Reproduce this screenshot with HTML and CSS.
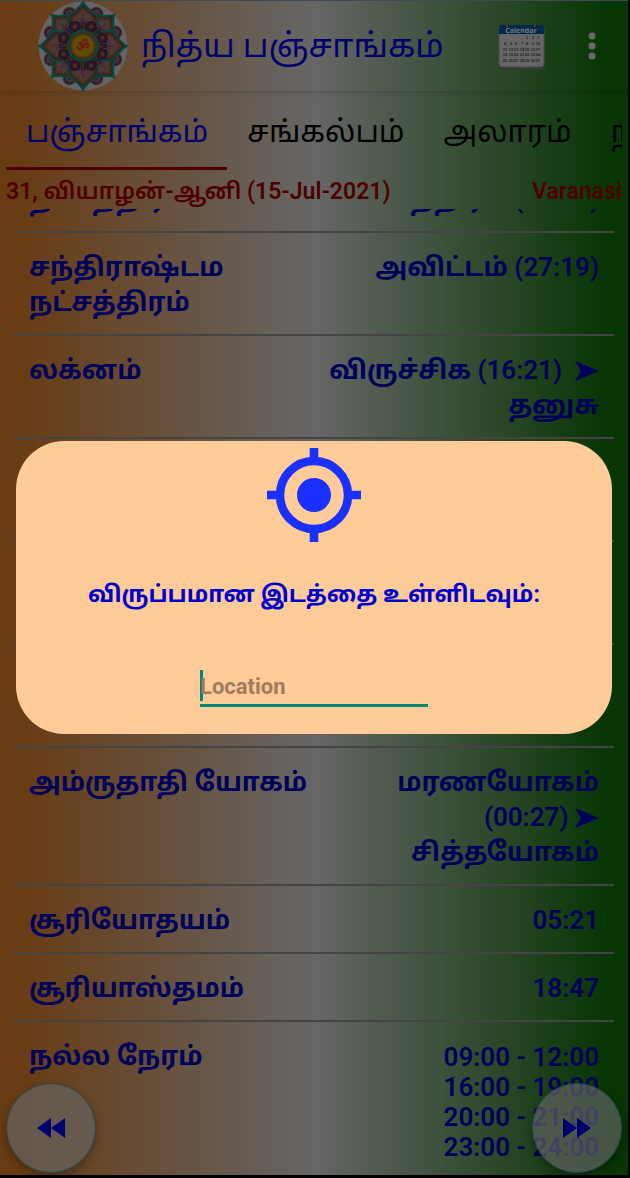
FILE: index.html
```html
<!DOCTYPE html>
<html lang="ta">
<head>
<meta charset="utf-8">
<meta name="viewport" content="width=device-width, initial-scale=1">
<title>நித்ய பஞ்சாங்கம்</title>
<link rel="stylesheet" href="styles.css">
</head>
<body>
<div class="app">
  <header class="toolbar">
    <svg class="logo" viewBox="-45 -45 90 90" aria-hidden="true">
      <defs>
        <g id="petal">
          <path d="M0-44C-3-38-8-35-12-32C-17-28-15-24-14-18L-10-12H10L14-18C15-24 17-28 12-32C8-35 3-38 0-44Z" fill="#33261a" stroke="#0a4545" stroke-width="2"/>
          <path d="M0-38C-3-33-12-30-11-24L-5-15H5L11-24C12-30 3-33 0-38Z" fill="#4e3636" stroke="#46301a" stroke-width="1.6"/>
          <path d="M0-32V-24M-3-27L0-23L3-27M-5-25L-3-21M5-25L3-21" fill="none" stroke="#3a2328" stroke-width="1"/>
        </g>
        <g id="bud">
          <circle cy="-35" r="7" fill="#44323a"/>
          <circle cy="-35" r="5" fill="none" stroke="#301520" stroke-width="1.4"/>
          <circle cy="-34" r="2.400" fill="#4c1d26"/>
        </g>
        <g id="bead">
          <circle cy="-21" r="5.500" fill="#20142e"/>
          <circle cy="-21" r="3.500" fill="#401716"/>
          <circle cy="-21" r="1.600" fill="#453c20"/>
        </g>
      </defs>
      <circle r="44.500" fill="#646464"/>
      <g>
        <use href="#bud" transform="rotate(22.500)"/><use href="#bud" transform="rotate(67.500)"/><use href="#bud" transform="rotate(112.500)"/><use href="#bud" transform="rotate(157.500)"/>
        <use href="#bud" transform="rotate(202.500)"/><use href="#bud" transform="rotate(247.500)"/><use href="#bud" transform="rotate(292.500)"/><use href="#bud" transform="rotate(337.500)"/>
        <use href="#petal" transform="rotate(45)"/><use href="#petal" transform="rotate(135)"/><use href="#petal" transform="rotate(225)"/><use href="#petal" transform="rotate(315)"/>
        <use href="#petal"/><use href="#petal" transform="rotate(90)"/><use href="#petal" transform="rotate(180)"/><use href="#petal" transform="rotate(270)"/>
      </g>
      <circle r="20" fill="#2b2418"/>
      <circle r="21" fill="none" stroke="#2a172c" stroke-width="6" stroke-dasharray="2 1"/>
      <circle r="18" fill="none" stroke="#3c3119" stroke-width="3" stroke-dasharray="2 2"/>
      <g>
        <use href="#bead" transform="rotate(22.500)"/><use href="#bead" transform="rotate(67.500)"/><use href="#bead" transform="rotate(112.500)"/><use href="#bead" transform="rotate(157.500)"/>
        <use href="#bead" transform="rotate(202.500)"/><use href="#bead" transform="rotate(247.500)"/><use href="#bead" transform="rotate(292.500)"/><use href="#bead" transform="rotate(337.500)"/>
      </g>
      <circle r="15" fill="#3a3018" stroke="#0a4545" stroke-width="1.800"/>
      <circle r="11.500" fill="#5f4a08" stroke="#4e3610" stroke-width="1.500"/>
      <text class="om" y="5">ॐ</text>
    </svg>
    <h1 class="title">நித்ய பஞ்சாங்கம்</h1>
    <button class="icon-button calendar" type="button" aria-label="Calendar">
      <svg viewBox="0 0 48 50" aria-hidden="true">
        <path d="M2 8H46L47 48Q47 49 45 49H4Q1 49 1 46Z" fill="#383838"/>
        <path d="M1 8H46V43Q46 46 43 46H4Q1 46 1 43Z" fill="#666" stroke="#4a4a4a"/>
        <path d="M1 6Q1 4 3 4H44Q46 4 46 6V13H1Z" fill="#06284c"/>
        <path d="M9 2V8M37 2V8" fill="none" stroke="#1b1b1b" stroke-width="3"/>
        <path d="M9 2V6M37 2V6" stroke="#666"/>
        <text x="23" y="12" class="cal-name">Calendar</text>
        <g class="cal-days">
          <text y="18"><tspan x="29">1</tspan><tspan x="35">2</tspan><tspan x="40">3</tspan></text>
          <text y="24"><tspan x="7">4</tspan><tspan x="13">5</tspan><tspan x="18">6</tspan><tspan x="24">7</tspan><tspan x="29">8</tspan><tspan x="35">9</tspan><tspan x="40">10</tspan></text>
          <text y="30"><tspan x="7">11</tspan><tspan x="13">12</tspan><tspan x="18">13</tspan><tspan x="24">14</tspan><tspan x="29">15</tspan><tspan x="35">16</tspan><tspan x="40">17</tspan></text>
          <text y="35"><tspan x="7">18</tspan><tspan x="13">19</tspan><tspan x="18">20</tspan><tspan x="24">21</tspan><tspan x="29">22</tspan><tspan x="35">23</tspan><tspan x="40">24</tspan></text>
          <text y="41"><tspan x="7">25</tspan><tspan x="13">26</tspan><tspan x="18">27</tspan><tspan x="24">28</tspan><tspan x="29">29</tspan><tspan x="35">30</tspan><tspan x="40">31</tspan></text>
        </g>
      </svg>
    </button>
    <button class="icon-button more" type="button" aria-label="Menu">
      <svg viewBox="0 0 8 28" aria-hidden="true"><g fill="#686868"><circle cx="4" cy="4" r="3.500"/><circle cx="4" cy="14" r="3.500"/><circle cx="4" cy="24" r="3.500"/></g></svg>
    </button>
  </header>

  <nav class="tabs">
    <a class="tab active" href="#panchangam">பஞ்சாங்கம்</a>
    <a class="tab" href="#sankalpam">சங்கல்பம்</a>
    <a class="tab" href="#alarm">அலாரம்</a>
    <a class="tab" href="#n">நி</a>
  </nav>

  <div class="dateline"><span>31, வியாழன்-ஆனி (15-Jul-2021)</span><span>Varanasi</span></div>

  <main class="list" id="panchangam">
    <dl class="rows">
      <div class="row"><dt>நட்சத்திரம்</dt><dd>உத்திரம் <span class="num">(27:19)</span></dd></div>
      <div class="row"><dt>சந்திராஷ்டம நட்சத்திரம்</dt><dd>அவிட்டம் <span class="num">(27:19)</span></dd></div>
      <div class="row"><dt>லக்னம்</dt><dd>விருச்சிக <span class="num">(16:21)</span> &nbsp;<svg class="arrow" viewBox="0 0 24 20" aria-hidden="true"><path d="M0 0L24 10L0 20L6 10Z"/></svg> தனுசு</dd></div>
      <div class="row blank"></div>
      <div class="row blank"></div>
      <div class="row blank"></div>
      <div class="row"><dt>அம்ருதாதி யோகம்</dt><dd>மரணயோகம் <span class="num">(00:27)</span> <svg class="arrow" viewBox="0 0 24 20" aria-hidden="true"><path d="M0 0L24 10L0 20L6 10Z"/></svg> சித்தயோகம்</dd></div>
      <div class="row"><dt>சூரியோதயம்</dt><dd class="num">05:21</dd></div>
      <div class="row"><dt>சூரியாஸ்தமம்</dt><dd class="num">18:47</dd></div>
      <div class="row"><dt>நல்ல நேரம்</dt><dd class="num times">09:00 - 12:00<br>16:00 - 19:00<br>20:00 - 21:00<br>23:00 - 24:00</dd></div>
    </dl>
  </main>

  <div class="pager">
    <button class="fab" type="button" aria-label="Previous"><svg viewBox="0 0 28 20" aria-hidden="true"><path d="M14 0V20L0 10ZM28 0V20L14 10Z"/></svg></button>
    <button class="fab" type="button" aria-label="Next"><svg viewBox="0 0 28 20" aria-hidden="true"><path d="M0 0V20L14 10ZM14 0V20L28 10Z"/></svg></button>
  </div>

  <div class="overlay">
    <section class="dialog" role="dialog" aria-labelledby="place-label">
      <svg class="target" viewBox="0 0 94 94" aria-hidden="true">
        <g fill="none" stroke="#1a30ff" stroke-width="8.600"><circle cx="47" cy="47" r="34"/><path d="M47 0V11M47 83V94M0 47H11M83 47H94"/></g>
        <circle cx="47" cy="47" r="17" fill="#1a30ff"/>
      </svg>
      <label class="prompt" id="place-label" for="place">விருப்பமான இடத்தை உள்ளிடவும்:</label>
      <div class="field"><input class="place" id="place" type="text" placeholder="Location"></div>
    </section>
  </div>
</div>
</body>
</html>
```
FILE: styles.css
```css
* { box-sizing: border-box; }

body {
  margin: 0;
  background: #000;
  font-family: Roboto, "Noto Sans Tamil", "Noto Sans", sans-serif;
}

.app {
  position: relative;
  display: flex;
  flex-direction: column;
  height: calc(100vh - 3px);
  margin-right: 2px;
  overflow: hidden;
  background: linear-gradient(to right, #683b12 2%, #666666 50%, #073504 97%);
}

.toolbar {
  display: flex;
  align-items: center;
  flex: none;
  height: 91px;
  padding: 0 32px 0 38px;
  border-top: 1px solid #3f4a55;
  box-shadow: 0 1px 5px rgba(0, 0, 0, 0.2);
}

.logo { width: 90px; height: 90px; flex: none; }
.om {
  font: 700 14px "Noto Sans Devanagari", "Noto Sans", sans-serif;
  fill: #6b1508;
  text-anchor: middle;
}

.title {
  flex: 1;
  margin: 0 0 0 13px;
  font-size: 33px;
  font-weight: 400;
  line-height: 48px;
  white-space: nowrap;
  color: #00006e;
}

.icon-button {
  padding: 0;
  border: 0;
  background: none;
}
.icon-button svg { display: block; }
.calendar svg { width: 48px; height: 50px; }
.more { margin-left: 42px; }
.more svg { width: 8px; height: 28px; }

.cal-name { font: 700 7px "Open Sans", sans-serif; fill: #717b86; text-anchor: middle; }
.cal-days { font: 700 4px "Liberation Sans", sans-serif; fill: #222; text-anchor: middle; }

.tabs {
  display: flex;
  flex: none;
  height: 79px;
  margin: 0 6px;
  overflow: hidden;
}
.tab {
  flex: none;
  padding: 2px 19px 0 20px;
  font-size: 30px;
  line-height: 78px;
  text-decoration: none;
  color: #000;
}
.active { color: #00006e; border-bottom: 3px solid #4e0000; }

.dateline {
  display: flex;
  justify-content: space-between;
  flex: none;
  padding: 6px 6px 2px;
  font-size: 23px;
  font-weight: 600;
  line-height: 31px;
  color: #4e0000;
}

.list { flex: 1; min-height: 0; overflow: hidden; }
.rows { margin: -44px 14px 0; }
.row {
  display: flex;
  justify-content: space-between;
  padding: 17px 15px 14px;
  border-bottom: 2px solid #444;
  font-size: 26px;
  font-weight: 700;
  line-height: 35px;
  color: #00005a;
}
.row dt { width: 280px; }
.row dd { width: 272px; margin: 0; text-align: right; }
.row .num { font-weight: 600; }
.row .times { line-height: 30px; padding-top: 3px; }
.row:last-child { border: 0; }
.blank { height: 103px; }
.arrow { width: 24px; height: 20px; fill: #00005a; vertical-align: -2px; }

.pager {
  position: absolute;
  right: 6px;
  bottom: 2px;
  left: 6px;
  display: flex;
  justify-content: space-between;
}
.fab {
  display: grid;
  place-items: center;
  width: 90px;
  height: 90px;
  padding: 0;
  border: 1px solid #23484d;
  border-radius: 50%;
  background: rgba(102, 102, 102, 0.66);
  box-shadow: 0 4px 8px rgba(0, 0, 0, 0.3);
}
.fab svg { width: 28px; height: 20px; fill: #00006e; }

.overlay {
  position: absolute;
  inset: 0;
  display: grid;
  align-items: center;
  padding: 0 16px;
}
.dialog {
  display: flex;
  flex-direction: column;
  align-items: center;
  padding: 7px 16px 27px;
  border-radius: 48px;
  background: #ffcb99;
}
.target { width: 94px; height: 94px; }
.prompt {
  margin: 35px 0 57px;
  font-size: 23px;
  font-weight: 700;
  line-height: 36px;
  color: #0000cc;
}
.field { width: 228px; border-bottom: 3px solid #008577; padding-bottom: 3px; }
.place {
  display: block;
  width: 100%;
  height: 31px;
  padding: 2px 0 0;
  border: 0;
  outline: 0;
  background: linear-gradient(#008577, #008577) no-repeat left / 3px 100%;
  font: 700 22px Roboto, sans-serif;
  color: #000;
}
.place::placeholder { color: #9d7d5e; opacity: 1; }
```
